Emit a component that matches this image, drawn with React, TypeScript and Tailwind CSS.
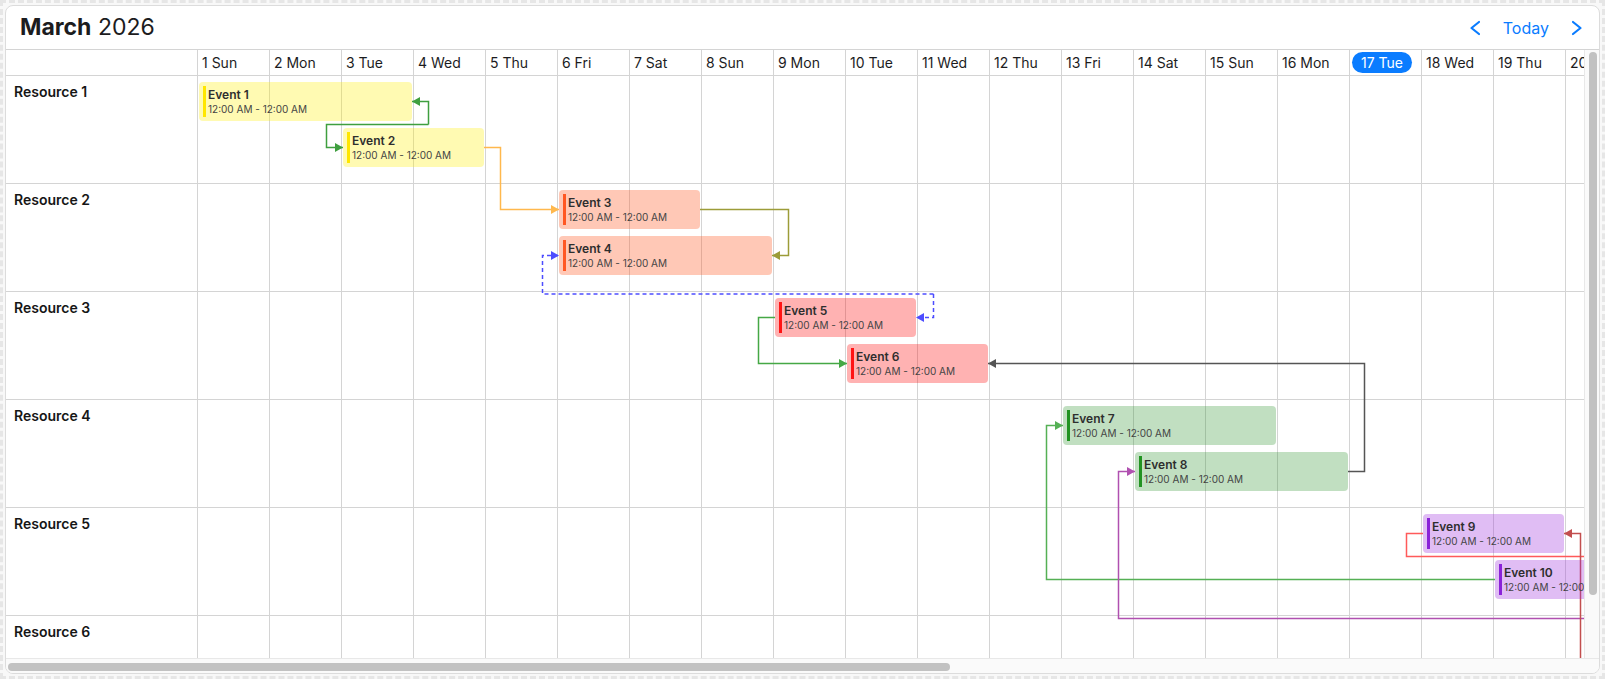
import React from "react";

const COL = 72;
const ROW = 108;

const weekdays = ["Sun", "Mon", "Tue", "Wed", "Thu", "Fri", "Sat"];

const days = Array.from({ length: 34 }, (_, i) => ({
  label: `${i < 31 ? i + 1 : i - 30} ${weekdays[i % 7]}`,
  today: i === 16,
}));

const resources = ["Resource 1", "Resource 2", "Resource 3", "Resource 4", "Resource 5", "Resource 6"];

const palette = {
  yellow: { bg: "bg-[rgba(255,240,0,0.3)]", bar: "bg-[#ffe600]" },
  orange: { bg: "bg-[rgba(255,87,34,0.33)]", bar: "bg-[#ff5722]" },
  red: { bg: "bg-[rgba(255,0,0,0.3)]", bar: "bg-[#ff1414]" },
  green: { bg: "bg-[rgba(34,139,34,0.28)]", bar: "bg-[#229322]" },
  purple: { bg: "bg-[rgba(160,50,220,0.32)]", bar: "bg-[#8a22d8]" },
};

type EventItem = {
  id: number;
  row: number;
  slot: 0 | 1;
  day: number;
  span: number;
  color: keyof typeof palette;
};

const events: EventItem[] = [
  { id: 1, row: 0, slot: 0, day: 0, span: 3, color: "yellow" },
  { id: 2, row: 0, slot: 1, day: 2, span: 2, color: "yellow" },
  { id: 3, row: 1, slot: 0, day: 5, span: 2, color: "orange" },
  { id: 4, row: 1, slot: 1, day: 5, span: 3, color: "orange" },
  { id: 5, row: 2, slot: 0, day: 8, span: 2, color: "red" },
  { id: 6, row: 2, slot: 1, day: 9, span: 2, color: "red" },
  { id: 7, row: 3, slot: 0, day: 12, span: 3, color: "green" },
  { id: 8, row: 3, slot: 1, day: 13, span: 3, color: "green" },
  { id: 9, row: 4, slot: 0, day: 17, span: 2, color: "purple" },
  { id: 10, row: 4, slot: 1, day: 18, span: 2, color: "purple" },
];

// dependency lines, in timeline coordinates
const links = [
  { d: "M230.5 48.5 V25.5 H214", color: "#3f9f3f", arrow: true },
  { d: "M230.5 48.5 H128.5 V71.5 H145", color: "#3f9f3f", arrow: true },
  { d: "M286 71.5 H302.5 V133.5 H361", color: "#ffb84d", arrow: true },
  { d: "M502 133.5 H590.5 V179.5 H574", color: "#9c9c38", arrow: true },
  { d: "M735.5 218 V241.5 H718", color: "#4d4dff", arrow: true, dashed: true },
  { d: "M735.5 218 H344.5 V179.5 H361", color: "#4d4dff", arrow: true, dashed: true },
  { d: "M577 241.5 H560.5 V287.5 H649", color: "#45a845", arrow: true },
  { d: "M1150 395.5 H1166.5 V287.5 H790", color: "#555555", arrow: true },
  { d: "M1297 503.5 H848.5 V349.5 H865", color: "#55b055", arrow: true },
  { d: "M1470 542.5 H920.5 V395.5 H937", color: "#b050b0", arrow: true },
  { d: "M1225 457.5 H1208.5 V480.5 H1470", color: "#ff5a5a", arrow: false },
  { d: "M1382.5 648 V457.5 H1366", color: "#c24e4e", arrow: true },
];

const markerId = (c: string) => `arrow-${c.replace("#", "")}`;

const EventBox = ({ ev }: { ev: EventItem }) => {
  const p = palette[ev.color];
  return (
    <div
      className={`absolute flex rounded-[4px] p-[4px] ${p.bg}`}
      style={{
        left: ev.day * COL + 1,
        top: ev.row * ROW + (ev.slot ? 52 : 6),
        width: ev.span * COL - 3,
        height: 39,
      }}
    >
      <div className={`w-[3px] shrink-0 ${p.bar}`} />
      <div className="ml-[2px] pt-[1px] overflow-hidden whitespace-nowrap">
        <div className="text-[12px] leading-[15px] font-semibold text-[#2e2e2e]">Event {ev.id}</div>
        <div className="text-[10px] leading-[14px] text-[#444]">12:00 AM - 12:00 AM</div>
      </div>
    </div>
  );
};

const Chevron = ({ dir }: { dir: "left" | "right" }) => (
  <svg width="12" height="16" viewBox="0 0 12 16" fill="none">
    <path
      d={dir === "left" ? "M10 2 L2.5 8 L10 14" : "M2 2 L9.5 8 L2 14"}
      stroke="#0a7cff"
      strokeWidth="2.2"
      strokeLinecap="round"
      strokeLinejoin="round"
    />
  </svg>
);

export default function App() {
  const colors = Array.from(new Set(links.map((l) => l.color)));

  return (
    <div className="h-screen w-full border-[3px] border-dashed border-[#e6e6e6] bg-[#f8f8f8] p-[2px] font-['Inter',sans-serif] text-[#1c1c1e]">
      <div className="flex h-full flex-col overflow-hidden rounded-[8px] border border-[#dcdcdc] bg-white">
        <div className="flex h-[44px] shrink-0 items-center justify-between border-b border-[#d4d4d4] pl-[14px] pr-[16px]">
          <div className="text-[23px] leading-none">
            <span className="font-bold">March</span> <span>2026</span>
          </div>
          <div className="flex items-center gap-[22px] text-[16px] text-[#0a7cff]">
            <button className="flex items-center">
              <Chevron dir="left" />
            </button>
            <button>Today</button>
            <button className="flex items-center">
              <Chevron dir="right" />
            </button>
          </div>
        </div>

        <div className="flex min-h-0 flex-1 flex-col">
          <div className="flex min-h-0 flex-1">
            <div className="min-w-0 flex-1 overflow-hidden">
              <div className="w-[2640px]">
                <div className="flex h-[26px] border-b border-[#d4d4d4]">
                  <div className="w-[192px] shrink-0 border-r border-[#d4d4d4]" />
                  {days.map((d) => (
                    <div
                      key={d.label}
                      className="flex w-[72px] shrink-0 items-center border-r border-[#d4d4d4] pl-[2px] text-[14px]"
                    >
                      {d.today ? (
                        <span className="rounded-full bg-[#0a7cff] px-[9px] leading-[21px] text-white">{d.label}</span>
                      ) : (
                        <span className="px-[2px]">{d.label}</span>
                      )}
                    </div>
                  ))}
                </div>

                <div className="relative">
                  {resources.map((r) => (
                    <div key={r} className="flex h-[108px] border-b border-[#d4d4d4]">
                      <div className="w-[192px] shrink-0 border-r border-[#d4d4d4] pl-[8px] pt-[6px] text-[14px] leading-5 font-semibold text-[#161616]">
                        {r}
                      </div>
                      {days.map((d) => (
                        <div key={d.label} className="w-[72px] shrink-0 border-r border-[#d4d4d4]" />
                      ))}
                    </div>
                  ))}

                  <div className="absolute top-0 bottom-0 left-[192px] right-0">
                    <svg className="pointer-events-none absolute left-0 top-0 overflow-visible" width="2448" height="648">
                      <defs>
                        {colors.map((c) => (
                          <marker
                            key={c}
                            id={markerId(c)}
                            viewBox="0 0 8 9"
                            refX="8"
                            refY="4.5"
                            markerWidth="8"
                            markerHeight="9"
                            markerUnits="userSpaceOnUse"
                            orient="auto"
                          >
                            <path d="M0 0 L8 4.5 L0 9 Z" fill={c} />
                          </marker>
                        ))}
                      </defs>
                      {links.map((l, i) => (
                        <path
                          key={i}
                          d={l.d}
                          fill="none"
                          stroke={l.color}
                          strokeWidth="1.5"
                          strokeDasharray={l.dashed ? "4 3" : undefined}
                          markerEnd={l.arrow ? `url(#${markerId(l.color)})` : undefined}
                        />
                      ))}
                    </svg>
                    {events.map((ev) => (
                      <EventBox key={ev.id} ev={ev} />
                    ))}
                  </div>
                </div>
              </div>
            </div>
            {/* vertical scrollbar */}
            <div className="w-[15px] shrink-0 border-l border-[#e8e8e8] bg-[#fafafa] pl-[3.5px] pt-[2px]">
              <div className="h-[543px] w-[8px] rounded-full bg-[#c2c2c2]" />
            </div>
          </div>
          {/* horizontal scrollbar */}
          <div className="flex h-[15px] shrink-0 border-t border-[#e8e8e8] bg-[#fafafa]">
            <div className="min-w-0 flex-1 pl-[2px] pt-[3.5px]">
              <div className="h-[8px] w-[942px] rounded-full bg-[#c2c2c2]" />
            </div>
            <div className="w-[15px] shrink-0" />
          </div>
        </div>
      </div>
    </div>
  );
}
